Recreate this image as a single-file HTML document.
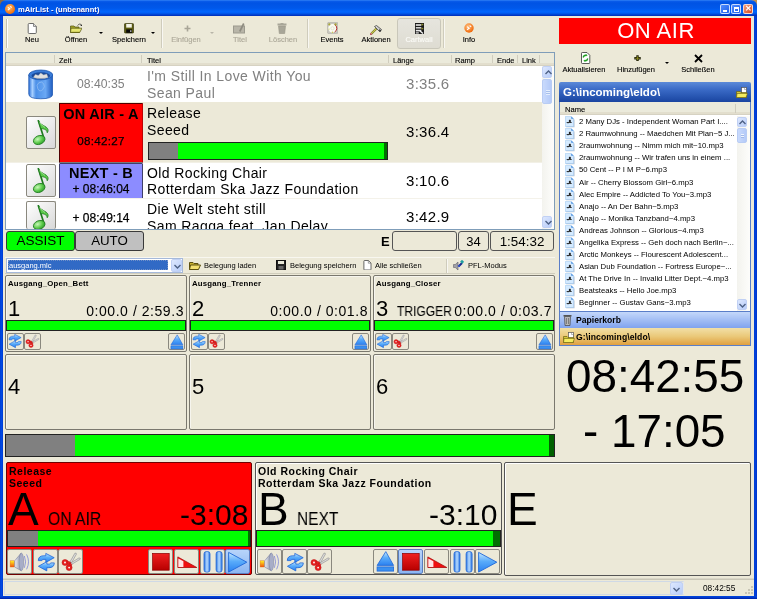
<!DOCTYPE html>
<html><head><meta charset="utf-8">
<style>
*{box-sizing:border-box;margin:0;padding:0}
html,body{width:757px;height:599px;overflow:hidden;background:#ECE9D8;font-family:"Liberation Sans",sans-serif;color:#000}
.a{position:absolute}
.t{position:absolute;white-space:nowrap;line-height:1;will-change:transform}
/* title bar */
#tb{left:0;top:0;width:757px;height:16px;border-radius:6px 6px 0 0;
 background:linear-gradient(#3C8CF7 0,#0A5CEB 1px,#0053E4 3px,#0058EA 8px,#0066FF 12px,#0050E0 14px,#0038C8 15px,#0030B8 16px)}
#lb{left:0;top:16px;width:3px;height:580px;background:linear-gradient(90deg,#0033CC,#0050E8 1px,#0044DD 2px,#0038D0 3px)}
#rb{left:754px;top:16px;width:3px;height:580px;background:linear-gradient(90deg,#0038D0,#0044DD 1px,#0033CC 3px)}
#bb{left:0;top:596px;width:757px;height:3px;background:linear-gradient(#0048E0,#0038CC 1.5px,#0020A0 3px)}
.sep{position:absolute;width:2px;border-left:1px solid #CFCCBC;border-right:1px solid #F8F7F2}
.tbt{position:absolute;font-size:7.5px;color:#000;white-space:nowrap;line-height:1;text-align:center;will-change:transform;-webkit-text-stroke:0.12px currentColor}
.dis{color:#ACA899}
.arrow{position:absolute;width:0;height:0;border-left:2.5px solid transparent;border-right:2.5px solid transparent;border-top:2.5px solid #000}
.hdr{position:absolute;font-size:7.5px;line-height:1;white-space:nowrap;will-change:transform;-webkit-text-stroke:0.12px #000}
.hsep{position:absolute;width:1px;height:8px;background:#D0CDBE}
.mus{position:absolute;width:30px;height:33px;border:1px solid #8A887E;border-radius:2px;background:linear-gradient(135deg,#FFFFFF,#E8E8E8 60%,#D8D8D8)}
.pbar{position:absolute;border:1px solid #222;background:#00FF00}
.rbtn{position:absolute;border:1px solid #555;border-radius:3px}
.cart{position:absolute;border:1px solid #7A786E;border-radius:2px;box-shadow:inset 1px 1px 0 #F6F5EE}
.cbtn{position:absolute;width:17px;height:17px;border:1px solid #8A887E;border-radius:2px;background:#ECE9D8}
.pbtn{position:absolute;width:25px;height:25px;border:1px solid #8A887E;border-radius:2px;background:#ECE9D8}
.fl{position:absolute;font-size:7.75px;line-height:1;white-space:nowrap;color:#000;will-change:transform}
.fic{position:absolute;width:8px;height:10px;border:1px solid #7E9BC9;border-radius:1px;background:linear-gradient(90deg,#fff,#DCE8FA)}
</style></head><body>
<svg width="0" height="0" style="position:absolute">
<defs>
<linearGradient id="gBlue" x1="0" y1="0" x2="0" y2="1"><stop offset="0" stop-color="#C8E8FF"/><stop offset="0.45" stop-color="#5AACFA"/><stop offset="1" stop-color="#2A80F0"/></linearGradient>
<linearGradient id="gBlueH" x1="0" y1="0" x2="1" y2="0"><stop offset="0" stop-color="#2A74E0"/><stop offset="0.5" stop-color="#B8DCFF"/><stop offset="1" stop-color="#2A74E0"/></linearGradient>
<linearGradient id="gRed" x1="0" y1="0" x2="0" y2="1"><stop offset="0" stop-color="#F02020"/><stop offset="1" stop-color="#B80000"/></linearGradient>
<linearGradient id="gCone" x1="0" y1="0" x2="1" y2="0"><stop offset="0" stop-color="#F0F0F8"/><stop offset="1" stop-color="#8890A8"/></linearGradient>
<linearGradient id="gOr" x1="0" y1="0" x2="0" y2="1"><stop offset="0" stop-color="#FFF020"/><stop offset="1" stop-color="#F05010"/></linearGradient>
<radialGradient id="gNote" cx="40%" cy="35%" r="70%"><stop offset="0" stop-color="#C8F8B8"/><stop offset="0.6" stop-color="#58C848"/><stop offset="1" stop-color="#2A9A2A"/></radialGradient>
<symbol id="sLoop" viewBox="0 0 25 25"><g fill="url(#gBlue)" stroke="#1E66D8" stroke-width="0.8" stroke-linejoin="round"><path d="M5.3 11.6C5.3 8.2 7.4 6.8 10.8 6.8H12.8V4.4L21.2 8.7 12.8 13.4V10.4H11C9.6 10.4 8.9 10.9 8.9 11.6Z"/><path d="M21.3 13.9C21.3 17.3 19.2 18.7 15.8 18.7H13.8V21.9L5.4 17.3 13.8 12.7V15.1H15.6C17 15.1 17.7 14.6 17.7 13.9Z"/></g></symbol>
<symbol id="sSc" viewBox="0 0 25 25"><g fill="#DCDCDC" stroke="#8A8A8A" stroke-width="0.6" stroke-linejoin="round"><path d="M11.6 13.6L16.9 4.2Q18.6 3.6 18.4 5.2L13.3 14.2Z"/><path d="M12.4 14.2L21 8.9Q22.9 8.9 22.1 10.3L13.5 15.4Z"/></g><g fill="#E82020" stroke="#B81010" stroke-width="0.5"><circle cx="7" cy="13.5" r="3"/><circle cx="11.1" cy="18.6" r="3"/><path d="M9 11.8L12.6 13.2 12.2 15.2 9.4 15.4Z"/><path d="M10.6 15.8L12.6 14 13.8 15.6 13.2 16.8Z"/></g><circle cx="7" cy="13.5" r="0.9" fill="#fff"/><circle cx="11.1" cy="18.6" r="0.9" fill="#fff"/></symbol>
<symbol id="sSpk" viewBox="0 0 25 25"><rect x="3.1" y="11.8" width="4.6" height="6.2" fill="url(#gOr)" stroke="#E07010" stroke-width="0.4"/><path d="M7.7 11.8L14.2 4V21.7L7.7 18Z" fill="url(#gCone)" stroke="#7A80A0" stroke-width="0.6"/><ellipse cx="14.4" cy="12.9" rx="2.3" ry="8.8" fill="#A8AEC8" stroke="#7A80A0" stroke-width="0.5"/><path d="M17.4 7Q19.8 12.8 17.4 18.8M19.6 5.4Q23.4 12.8 19.6 20.3" stroke="#8890D8" stroke-width="0.9" fill="none"/></symbol>
<symbol id="sStop" viewBox="0 0 25 25"><rect x="4.6" y="4.4" width="16.6" height="16.8" fill="url(#gRed)" stroke="#8A0000" stroke-width="0.7"/></symbol>
<symbol id="sFade" viewBox="0 0 25 25"><path d="M3.8 7.9V18.5H22.8Z" fill="#F01010" stroke="#A00000" stroke-width="0.7"/><path d="M4.3 9.5V18H9.4V12.2Z" fill="#FFE4E4"/></symbol>
<symbol id="sPause" viewBox="0 0 25 25"><rect x="4" y="2.6" width="6" height="20.5" rx="2.3" fill="url(#gBlueH)" stroke="#1E66D8" stroke-width="0.8"/><rect x="16.1" y="2.6" width="6" height="20.5" rx="2.3" fill="url(#gBlueH)" stroke="#1E66D8" stroke-width="0.8"/></symbol>
<symbol id="sPlay" viewBox="0 0 25 25"><path d="M3.6 3.4L21.8 13.2 3.6 23.1Z" fill="url(#gBlue)" stroke="#1E66D8" stroke-width="0.9" stroke-linejoin="round"/></symbol>
<symbol id="sEject" viewBox="0 0 25 25"><path d="M12.8 2.6L20.6 16.4H4.1Z" fill="url(#gBlue)" stroke="#1E66D8" stroke-width="0.8" stroke-linejoin="round"/><rect x="4.1" y="17.9" width="16.5" height="4.2" fill="#3A90F0" stroke="#1E66D8" stroke-width="0.8"/></symbol>
<symbol id="sNote" viewBox="0 0 29 32"><path d="M12.2 4.2L18 22.5" stroke="#1E7A1E" stroke-width="1.7"/><path d="M12.2 4C13.5 8 17 9 20 11 22.5 12.8 22.6 15 21.2 16.8 21 14 19 13 14.8 12.5Z" fill="#58C848" stroke="#1E7A1E" stroke-width="0.8"/><path d="M13.5 6.5C15 9 17.5 10 19 11.5" stroke="#B8F0A8" stroke-width="0.7" fill="none"/><ellipse cx="13.2" cy="24" rx="6" ry="4.3" transform="rotate(-22 13.2 24)" fill="url(#gNote)" stroke="#1E7A1E" stroke-width="0.8"/></symbol>
</defs></svg>
<!-- window frame -->
<div class="a" style="left:0;top:0;width:8px;height:8px;background:#8A6A48"></div><div class="a" style="left:749px;top:0;width:8px;height:8px;background:#C09050"></div>
<div id="tb" class="a"></div>
<div id="lb" class="a"></div>
<div id="rb" class="a"></div>
<div id="bb" class="a"></div>
<div class="a" style="left:5.2px;top:4.4px;width:9.5px;height:9.5px;border-radius:50%;background:radial-gradient(circle at 40% 35%,#FFC070,#F07010 70%,#C85000)"></div><svg class="a" style="left:5.2px;top:4.4px" width="9.5" height="9.5" viewBox="0 0 10 10"><path d="M3 3.5l2 1.5-2 1.5M5.5 2.5l1.5 1.2" stroke="#fff" stroke-width="1.1" fill="none"/></svg>
<div class="t" style="left:18px;top:6px;font-size:7.6px;font-weight:bold;color:#fff;text-shadow:0.5px 0.5px 0 #0A1E9A">mAirList - (unbenannt)</div>
<div class="a" style="left:720px;top:4px;width:10px;height:10px;border:1px solid rgba(230,240,255,0.85);border-radius:2px;background:linear-gradient(135deg,#4D8BFF,#1F5FE8)"><div class="a" style="left:2px;top:5px;width:4px;height:2px;background:#fff"></div></div>
<div class="a" style="left:731px;top:4px;width:10px;height:10px;border:1px solid rgba(230,240,255,0.85);border-radius:2px;background:linear-gradient(135deg,#4D8BFF,#1F5FE8)"><div class="a" style="left:2px;top:2px;width:5px;height:5px;border:1px solid #fff;border-top-width:2px"></div></div>
<div class="a" style="left:743px;top:4px;width:10px;height:10px;border:1px solid rgba(255,235,225,0.85);border-radius:2px;background:linear-gradient(135deg,#F0A080,#D84820)"><div class="t" style="left:1px;top:0px;font-size:8px;font-weight:bold;color:#fff">&#x2715;</div></div>

<!-- toolbar -->
<div class="a" style="left:6px;top:19px;width:2px;height:29px;border-left:1px solid #C5C2B2;border-right:1px solid #fff"></div>
<!-- main toolbar labels -->
<div class="tbt " style="left:-8.00px;top:35.65px;width:80px;font-size:7.5px">Neu</div>
<div class="tbt " style="left:36.30px;top:35.65px;width:80px;font-size:7.5px">Öffnen</div>
<div class="tbt " style="left:88.80px;top:35.65px;width:80px;font-size:7.5px">Speichern</div>
<div class="tbt dis" style="left:146.00px;top:35.65px;width:80px;font-size:7.5px">Einfügen</div>
<div class="tbt dis" style="left:199.50px;top:35.65px;width:80px;font-size:7.5px">Titel</div>
<div class="tbt dis" style="left:243.25px;top:35.65px;width:80px;font-size:7.5px">Löschen</div>
<div class="tbt " style="left:292.20px;top:35.65px;width:80px;font-size:7.5px">Events</div>
<div class="tbt " style="left:335.60px;top:35.65px;width:80px;font-size:7.5px">Aktionen</div>
<div class="tbt " style="left:428.90px;top:35.65px;width:80px;font-size:7.5px">Info</div>
<!-- right toolbar labels -->
<div class="tbt " style="left:543.50px;top:65.65px;width:80px;font-size:7.5px">Aktualisieren</div>
<div class="tbt " style="left:596.30px;top:65.65px;width:80px;font-size:7.5px">Hinzufügen</div>
<div class="tbt " style="left:657.70px;top:65.65px;width:80px;font-size:7.5px">Schließen</div>
<!-- toolbar separators -->
<div class="sep" style="left:161px;top:19px;height:29px"></div>
<div class="sep" style="left:307px;top:19px;height:29px"></div>
<div class="sep" style="left:443px;top:19px;height:29px"></div>
<!-- cartwall pressed button -->
<div class="a" style="left:397px;top:18px;width:44px;height:31px;border:1px solid #C9C7BA;border-radius:3px;background:linear-gradient(#E6E5DE,#DEDCD2)"></div>
<div class="tbt" style="left:379.4px;top:35.65px;width:80px;font-size:7.5px;color:#FAFAF6">Cartwall</div>
<!-- icons -->
<svg class="a" style="left:26.6px;top:22.8px" width="10" height="11" viewBox="0 0 10 11"><path d="M1.2 1.5q0-1 1-1h4.3l2.8 2.8v6.2q0 1-1 1h-6.1q-1 0-1-1z" fill="#fff" stroke="#5A5A5A" stroke-width="0.9"/><path d="M6.5 0.6v2.8h2.8" fill="#E8E8E8" stroke="#5A5A5A" stroke-width="0.7"/></svg>
<svg class="a" style="left:69.8px;top:22.8px" width="12.5" height="10" viewBox="0 0 12.5 10"><path d="M0.5 3h3.5l1 1h4v5.5h-8.5z" fill="#A8A828" stroke="#505010" stroke-width="0.7"/><path d="M1 5.2h11l-2.3 4.3h-9.2z" fill="#E6E670" stroke="#505010" stroke-width="0.7"/><path d="M1.2 9.3h8.6" stroke="#6A6A10" stroke-width="0.8"/><path d="M7.5 2.5q1.5-2.2 3.5-1.2" stroke="#333" stroke-width="0.7" fill="none"/><circle cx="11.3" cy="2.3" r="0.8" fill="#222"/></svg>
<svg class="a" style="left:123.5px;top:23px" width="10" height="10.5" viewBox="0 0 10 10.5"><rect x="0.4" y="0.4" width="9.2" height="9.7" rx="1.2" fill="#5A5A10" stroke="#2A2A08" stroke-width="0.6"/><rect x="2.2" y="1" width="5.6" height="3.6" fill="#F4F4E8"/><rect x="2.2" y="6.4" width="5.8" height="3.4" fill="#080808"/><rect x="6.2" y="7.3" width="1.2" height="1.6" fill="#E0E0E0"/></svg>
<div class="arrow" style="left:98.8px;top:31.8px"></div>
<div class="arrow" style="left:151.2px;top:31.8px"></div>
<div class="arrow" style="left:210px;top:31.5px;border-left-width:2px;border-right-width:2px;border-top-width:2px;border-top-color:#B8B5A8"></div>
<svg class="a" style="left:183.5px;top:25px" width="7" height="7" viewBox="0 0 7 7"><path d="M3.5 0.5v6M0.5 3.5h6" stroke="#A8A597" stroke-width="1.6"/></svg>
<svg class="a" style="left:233px;top:22px" width="13" height="12" viewBox="0 0 13 12"><rect x="0.5" y="4" width="11" height="7" fill="#B8B5A8" stroke="#9C9A8E"/><path d="M6 9l4-8 1.5 1-4 8z" fill="#8E8C80"/></svg>
<svg class="a" style="left:277px;top:23px" width="10" height="11" viewBox="0 0 10 11"><rect x="0.5" y="0.5" width="9" height="2" fill="#A8A698"/><rect x="3.5" y="0" width="3" height="1" fill="#A8A698"/><path d="M1.5 3h7l-0.8 7.5h-5.4z" fill="#A8A698" stroke="#989688" stroke-width="0.6"/></svg>
<svg class="a" style="left:326.5px;top:22px" width="11.5" height="12" viewBox="0 0 11.5 12"><rect x="0.3" y="0.3" width="10.9" height="11.4" rx="1.8" fill="#C8C6BE" stroke="#A8A69E" stroke-width="0.5"/><circle cx="5.5" cy="6.3" r="4.2" fill="#FBFBF0"/><path d="M7.6 2.6a4.2 4.2 0 0 1 0 7.4" stroke="#B83030" stroke-width="1" fill="none"/><circle cx="5.5" cy="6.3" r="1.6" fill="none" stroke="#D8D8C8" stroke-width="0.7"/><circle cx="2.3" cy="2.4" r="1.1" fill="#A8A838"/><circle cx="8.6" cy="2.4" r="1.1" fill="#A8A838"/><circle cx="5.5" cy="10.3" r="0.7" fill="#C8C848"/><circle cx="2" cy="7" r="0.6" fill="#C8C848"/></svg>
<svg class="a" style="left:369.5px;top:24.5px" width="12" height="10" viewBox="0 0 12 10"><path d="M0.8 9.2L6.5 3.5" stroke="#6A6A20" stroke-width="2.2" stroke-linecap="round"/><path d="M0.8 9.2L6.5 3.5" stroke="#C8C850" stroke-width="1.2"/><path d="M4.5 1.5L6.5 0.5 11.5 4.5 10 7 Z" fill="#D0D0D0" stroke="#333" stroke-width="0.7"/><path d="M9.2 4.8l1.5 1.2" stroke="#222" stroke-width="1.2"/><circle cx="0.9" cy="9.1" r="0.8" fill="#F040A0"/></svg>
<svg class="a" style="left:415px;top:22.5px" width="9" height="11.5" viewBox="0 0 9 11.5"><rect x="0" y="0" width="9" height="11.5" fill="#1A1A1A"/><rect x="0.8" y="1.2" width="5.5" height="1.6" fill="#E8E8E8"/><rect x="0.8" y="4" width="5.5" height="1.6" fill="#D0D0D0"/><rect x="0.8" y="6.8" width="5.5" height="1.6" fill="#E8E8E8"/><rect x="0.8" y="9.2" width="3" height="1.4" fill="#C8C8C8"/><rect x="6.3" y="0.8" width="2" height="1.5" fill="#8A8A30"/><rect x="6.3" y="4.8" width="2" height="1.5" fill="#8A8A30"/><path d="M5 8l3 2.5" stroke="#F0F0F0" stroke-width="1.4"/></svg>
<svg class="a" style="left:463.5px;top:23px" width="10" height="10" viewBox="0 0 10 10"><defs><radialGradient id="ig" cx="40%" cy="35%" r="65%"><stop offset="0" stop-color="#FFC080"/><stop offset="1" stop-color="#F06808"/></radialGradient></defs><circle cx="5" cy="5" r="4.7" fill="url(#ig)"/><path d="M3 3.6l2.2 1.6-2.2 1.6M5.6 2.6l1.6 1.2" stroke="#fff" stroke-width="1.1" fill="none"/></svg>
<!-- right panel ON AIR -->
<div class="a" style="left:559px;top:18px;width:192px;height:26px;background:#FF0000"></div>
<div class="t" style="left:559.5px;top:20.1px;width:192px;text-align:center;font-size:22px;letter-spacing:0.5px;color:#fff">ON AIR</div>
<svg class="a" style="left:579.5px;top:52px" width="11" height="12" viewBox="0 0 11 12"><path d="M1.5 1.3q0-0.8 0.8-0.8h4.7l2.8 2.8v7.4q0 0.8-0.8 0.8h-6.7q-0.8 0-0.8-0.8z" fill="#fff" stroke="#333" stroke-width="0.8"/><path d="M3.2 5.5q0.5-2.5 3-2.2M7.8 6.5q-0.5 2.5-3 2.2" stroke="#20A020" stroke-width="1.3" fill="none"/><path d="M5.8 2l1.8 1.3-1.8 1.3z" fill="#20A020"/><path d="M5.2 10l-1.8-1.3 1.8-1.3z" fill="#20A020"/></svg>
<svg class="a" style="left:634px;top:54.8px" width="7" height="6.5" viewBox="0 0 7 6.5"><path d="M3.5 0.3v5.9M0.3 3.25h6.4" stroke="#202008" stroke-width="2.4"/><path d="M3.5 1.3v3.9M1.3 3.25h4.4" stroke="#8A8A20" stroke-width="0.9"/></svg>
<div class="arrow" style="left:664.5px;top:61.5px"></div>
<svg class="a" style="left:694px;top:54px" width="9" height="9" viewBox="0 0 9 9"><path d="M1 1l7 7M8 1l-7 7" stroke="#000" stroke-width="1.8"/></svg>

<!-- playlist -->
<div class="a" style="left:5px;top:52px;width:550px;height:178px;border:1px solid #7F9DB9;background:#fff"></div>
<div class="a" style="left:6px;top:53px;width:548px;height:13px;background:#EBEADB;border-bottom:1px solid #D6D2C2;box-shadow:inset 0 -2px 0 #E2DECD"></div>
<div class="hsep" style="left:54px;top:55px"></div>
<div class="hsep" style="left:141px;top:55px"></div>
<div class="hsep" style="left:388px;top:55px"></div>
<div class="hsep" style="left:451px;top:55px"></div>
<div class="hsep" style="left:492px;top:55px"></div>
<div class="hsep" style="left:517px;top:55px"></div>
<div class="hsep" style="left:539px;top:55px"></div>
<div class="hdr" style="left:59px;top:56.6px;font-size:7.5px">Zeit</div>
<div class="hdr" style="left:147px;top:56.6px;font-size:7.5px">Titel</div>
<div class="hdr" style="left:392.5px;top:56.6px;font-size:7.5px">Länge</div>
<div class="hdr" style="left:455px;top:56.6px;font-size:7.5px">Ramp</div>
<div class="hdr" style="left:496.5px;top:56.6px;font-size:7.5px">Ende</div>
<div class="hdr" style="left:521.5px;top:56.6px;font-size:7.5px">Link</div>
<!-- row1 -->
<svg class="a" style="left:27.5px;top:69px" width="25.5" height="30.5" viewBox="0 0 26 31"><defs><linearGradient id="bin" x1="0" x2="1"><stop offset="0" stop-color="#2A70D8"/><stop offset="0.15" stop-color="#A8D0FF"/><stop offset="0.3" stop-color="#4C90E8"/><stop offset="0.7" stop-color="#6AA8F4"/><stop offset="1" stop-color="#1E5CC0"/></linearGradient></defs><path d="M0.8 6v19.5q0 4.8 12.2 4.8t12.2-4.8v-19.5z" fill="url(#bin)" stroke="#2058B0" stroke-width="0.8"/><ellipse cx="13" cy="6" rx="12.2" ry="5" fill="#3A7CD8" stroke="#2058B0" stroke-width="0.8"/><ellipse cx="13" cy="6.8" rx="9.5" ry="3.6" fill="#1A4A9A"/><path d="M5.5 8.5l2-3 3 1 2.5-2.5 3 2 3-1 1.5 3.5q-7 2.5-15 0z" fill="#E0E0E0" stroke="#B0B0B0" stroke-width="0.4"/><path d="M11 14q3-2 5 1t-1 6-5-1 1-6z" fill="none" stroke="#9CC4F4" stroke-width="0.8" opacity="0.8"/></svg>
<div class="t" style="left:77px;top:78.2px;font-size:12.2px;color:#808080">08:40:35</div>
<div class="t" style="left:147px;top:68.7px;font-size:14px;letter-spacing:0.4px;color:#808080">I'm Still In Love With You</div>
<div class="t" style="left:147px;top:85.6px;font-size:14px;letter-spacing:0.4px;color:#808080">Sean Paul</div>
<div class="t" style="left:405.5px;top:76.2px;font-size:15px;letter-spacing:0.3px;color:#808080">3:35.6</div>
<!-- row2 -->
<div class="a" style="left:6px;top:102px;width:536px;height:61px;background:#ECE9D8;border-bottom:1px solid #F2F0E6"></div>
<div class="a" style="left:59px;top:103px;width:84px;height:60px;background:#FF0000;border:1px solid #500000;border-right-color:#C00000;border-bottom-color:#7A7A7A;border-radius:1px"></div>
<div class="t" style="left:59px;top:106.8px;width:84px;text-align:center;font-size:14.5px;font-weight:bold;letter-spacing:0.25px">ON AIR - A</div>
<div class="t" style="left:59px;top:134.8px;width:84px;text-align:center;font-size:11.6px;letter-spacing:0.3px;-webkit-text-stroke:0.25px #000">08:42:27</div>
<div class="t" style="left:147px;top:105.6px;font-size:14px;letter-spacing:0.4px">Release</div>
<div class="t" style="left:147px;top:122.5px;font-size:14px;letter-spacing:0.4px">Seeed</div>
<div class="pbar" style="left:147.5px;top:142px;width:240px;height:18px;background:linear-gradient(90deg,#808080 0,#808080 29px,#00FF00 29px,#00FF00 235.5px,#007000 235.5px)"></div>
<div class="t" style="left:405.5px;top:124.1px;font-size:15px;letter-spacing:0.3px">3:36.4</div>
<!-- row3 -->
<div class="a" style="left:59px;top:163px;width:84px;height:36px;background:#8C8CFF;border:1px solid #40406A;border-radius:1px"></div>
<div class="t" style="left:59px;top:166.4px;width:84px;text-align:center;font-size:14.5px;font-weight:bold;letter-spacing:0.25px">NEXT - B</div>
<div class="t" style="left:59px;top:182.6px;width:84px;text-align:center;font-size:12px;-webkit-text-stroke:0.25px #000">+ 08:46:04</div>
<div class="t" style="left:147px;top:165.7px;font-size:14px;letter-spacing:0.4px">Old Rocking Chair</div>
<div class="t" style="left:147px;top:182.4px;font-size:14px;letter-spacing:0.4px">Rotterdam Ska Jazz Foundation</div>
<div class="t" style="left:405.5px;top:172.6px;font-size:15px;letter-spacing:0.3px">3:10.6</div>
<div class="a" style="left:6px;top:198px;width:536px;height:1px;background:#F4F2EA"></div>
<!-- row4 -->
<div class="a" style="left:0;top:0;width:757px;height:229px;overflow:hidden">
<div class="t" style="left:59px;top:212.4px;width:84px;text-align:center;font-size:12px;-webkit-text-stroke:0.25px #000">+ 08:49:14</div>
<div class="t" style="left:147px;top:201.6px;font-size:14px;letter-spacing:0.4px">Die Welt steht still</div>
<div class="t" style="left:147px;top:218.6px;font-size:14px;letter-spacing:0.4px">Sam Ragga feat. Jan Delay</div>
<div class="t" style="left:405.5px;top:208.8px;font-size:15px;letter-spacing:0.3px">3:42.9</div>
</div>
<!-- music buttons -->
<div class="mus" style="left:25.5px;top:116px"><svg class="a" style="left:-1px;top:-1px" width="29" height="32"><use href="#sNote"/></svg></div>
<div class="mus" style="left:25.5px;top:164px;height:33px"><svg class="a" style="left:-1px;top:-1px" width="29" height="32"><use href="#sNote"/></svg></div>
<div class="mus" style="left:25.5px;top:201px;height:28px;border-bottom:none;overflow:hidden"><svg class="a" style="left:-1px;top:-1px" width="29" height="32"><use href="#sNote"/></svg></div>



<!-- scrollbar -->
<div class="a" style="left:542px;top:66px;width:12px;height:163px;background:linear-gradient(90deg,#F3F3EE,#FDFDFB)"></div>
<div class="a" style="left:542px;top:66px;width:10px;height:12px;border:1px solid #C0D0F4;border-radius:2px;background:linear-gradient(135deg,#DDE8FE,#B8CDF9)"><svg class="a" style="left:2px;top:3px" width="7" height="5" viewBox="0 0 7 5"><path d="M0.5 4l3-3 3 3" stroke="#4D6185" stroke-width="1.4" fill="none"/></svg></div>
<div class="a" style="left:542px;top:78.5px;width:10px;height:25.5px;border:1px solid #B8CCF4;border-radius:2px;background:linear-gradient(90deg,#C9DAFC,#B4CAF8)"><div class="a" style="left:2.5px;top:10px;width:4px;height:5px;background:repeating-linear-gradient(#E4EEFE 0,#E4EEFE 1px,#A8C0EC 1px,#A8C0EC 2px)"></div></div>
<div class="a" style="left:542px;top:216px;width:10px;height:12px;border:1px solid #C0D0F4;border-radius:2px;background:linear-gradient(135deg,#DDE8FE,#B8CDF9)"><svg class="a" style="left:2px;top:3px" width="7" height="5" viewBox="0 0 7 5"><path d="M0.5 1l3 3 3-3" stroke="#4D6185" stroke-width="1.4" fill="none"/></svg></div>

<!-- assist row -->
<div class="rbtn" style="left:6px;top:231px;width:69px;height:20px;background:#00FF00;border-color:#3A3A3A"></div>
<div class="t" style="left:6px;top:234.1px;width:69px;text-align:center;font-size:13.5px">ASSIST</div>
<div class="rbtn" style="left:75px;top:231px;width:69px;height:20px;background:#C0C0C0;border-color:#3A3A3A"></div>
<div class="t" style="left:75px;top:234.4px;width:69px;text-align:center;font-size:13.3px">AUTO</div>
<div class="t" style="left:381px;top:234.6px;font-size:13px;font-weight:bold">E</div>
<div class="rbtn" style="left:392px;top:231px;width:65px;height:20px;border-color:#555"></div>
<div class="rbtn" style="left:458px;top:231px;width:31px;height:20px;border-color:#555"></div>
<div class="t" style="left:458px;top:235.3px;width:31px;text-align:center;font-size:13px">34</div>
<div class="rbtn" style="left:490px;top:231px;width:64px;height:20px;border-color:#555"></div>
<div class="t" style="left:490px;top:235.3px;width:64px;text-align:center;font-size:13.4px">1:54:32</div>
<!-- cartwall toolbar -->
<div class="a" style="left:5px;top:257px;width:550px;height:17px;border-top:1px solid #F8F7F0;border-bottom:1px solid #D0CDBC"></div>
<div class="a" style="left:6px;top:258px;width:177px;height:15px;border:1px solid #A5B9DA;background:#fff"></div>
<div class="a" style="left:8px;top:260px;width:160px;height:10px;background:#316AC5;border:1px dotted #7090C8"></div>
<div class="t" style="left:8.5px;top:261.6px;font-size:7.5px;color:#fff">ausgang.mlc</div>
<div class="a" style="left:171px;top:259px;width:11px;height:13px;border:1px solid #C0D0F4;border-radius:2px;background:linear-gradient(135deg,#DDE8FE,#B8CDF9)"><svg class="a" style="left:2px;top:4px" width="7" height="5" viewBox="0 0 7 5"><path d="M0.5 1l3 3 3-3" stroke="#4D6185" stroke-width="1.4" fill="none"/></svg></div>
<svg class="a" style="left:189px;top:260px" width="12" height="10" viewBox="0 0 12 10"><path d="M0.5 2.5h3.5l1 1h4v6h-8.5z" fill="#C8B030" stroke="#5C5010"/><path d="M1.5 5h10l-2 4.5h-9z" fill="#F4E070" stroke="#5C5010"/></svg>
<div class="t" style="left:203.5px;top:262px;font-size:7.5px">Belegung laden</div>
<svg class="a" style="left:276px;top:260px" width="10" height="10" viewBox="0 0 10 10"><rect x="0.5" y="0.5" width="9" height="9" fill="#222" stroke="#111"/><rect x="2" y="1" width="6" height="3" fill="#E8E8D8"/><rect x="2.5" y="6" width="5" height="3.5" fill="#666"/></svg>
<div class="t" style="left:290px;top:262px;font-size:7.5px">Belegung speichern</div>
<svg class="a" style="left:363px;top:259.5px" width="8.5" height="10.5" viewBox="0 0 8.5 10.5"><path d="M0.9 1.2q0-0.7 0.7-0.7h3.8l2.6 2.6v6.2q0 0.7-0.7 0.7h-5.7q-0.7 0-0.7-0.7z" fill="#fff" stroke="#444" stroke-width="0.8"/><path d="M5.3 0.6v2.6h2.6" fill="none" stroke="#666" stroke-width="0.6"/></svg>
<div class="t" style="left:375.4px;top:262px;font-size:7.5px">Alle schließen</div>
<div class="sep" style="left:446px;top:259px;height:14px"></div>
<svg class="a" style="left:453px;top:259.5px" width="11" height="11" viewBox="0 0 11 11"><path d="M0.5 4.5h1.8l2.7-2.5v8l-2.7-2.5h-1.8z" fill="#A0A0A8" stroke="#606068" stroke-width="0.6"/><path d="M5.5 6.5l3.5-3.5" stroke="#1A2A90" stroke-width="2"/><rect x="7.6" y="0.4" width="3" height="2.8" fill="#20A0A0" transform="rotate(45 9.1 1.8)"/><circle cx="6" cy="6" r="1" fill="#3050D0"/></svg>
<div class="t" style="left:467.8px;top:262px;font-size:7.5px">PFL-Modus</div>

<!-- cart panels -->
<div class="cart" style="left:5px;top:275px;width:182px;height:77px"></div>
<div class="t" style="left:7.5px;top:279.9px;font-size:7.8px;font-weight:bold;letter-spacing:0.2px">Ausgang_Open_Bett</div>
<div class="t" style="left:8px;top:297.6px;font-size:22px">1</div>
<div class="t" style="left:5px;top:303.8px;width:179px;text-align:right;font-size:14px;letter-spacing:0.55px">0:00.0 / 2:59.3</div>
<div class="pbar" style="left:6px;top:320px;width:180px;height:11px"></div>
<div class="cbtn" style="left:6.5px;top:333px"><svg class="a" style="left:-2.6px;top:-2.8px" width="19" height="19"><use href="#sLoop"/></svg></div>
<div class="cbtn" style="left:23.5px;top:333px"><svg class="a" style="left:-2px;top:-2px" width="18" height="18"><use href="#sSc"/></svg></div>
<div class="cbtn" style="left:168px;top:333px"><svg class="a" style="left:-1.5px;top:-1.5px" width="18" height="18"><use href="#sEject"/></svg></div>
<div class="cart" style="left:189px;top:275px;width:182px;height:77px"></div>
<div class="t" style="left:191.5px;top:279.9px;font-size:7.8px;font-weight:bold;letter-spacing:0.2px">Ausgang_Trenner</div>
<div class="t" style="left:192px;top:297.6px;font-size:22px">2</div>
<div class="t" style="left:189px;top:303.8px;width:179px;text-align:right;font-size:14px;letter-spacing:0.55px">0:00.0 / 0:01.8</div>
<div class="pbar" style="left:190px;top:320px;width:180px;height:11px"></div>
<div class="cbtn" style="left:190.5px;top:333px"><svg class="a" style="left:-2.6px;top:-2.8px" width="19" height="19"><use href="#sLoop"/></svg></div>
<div class="cbtn" style="left:207.5px;top:333px"><svg class="a" style="left:-2px;top:-2px" width="18" height="18"><use href="#sSc"/></svg></div>
<div class="cbtn" style="left:352px;top:333px"><svg class="a" style="left:-1.5px;top:-1.5px" width="18" height="18"><use href="#sEject"/></svg></div>
<div class="cart" style="left:373px;top:275px;width:182px;height:77px"></div>
<div class="t" style="left:375.5px;top:279.9px;font-size:7.8px;font-weight:bold;letter-spacing:0.2px">Ausgang_Closer</div>
<div class="t" style="left:376px;top:297.6px;font-size:22px">3</div>
<div class="t" style="left:373px;top:303.8px;width:179px;text-align:right;font-size:14px;letter-spacing:0.55px">0:00.0 / 0:03.7</div>
<div class="t" style="left:396.8px;top:303.8px;font-size:14px;transform:scaleX(0.86);transform-origin:0 0">TRIGGER</div>
<div class="pbar" style="left:374px;top:320px;width:180px;height:11px"></div>
<div class="cbtn" style="left:374.5px;top:333px"><svg class="a" style="left:-2.6px;top:-2.8px" width="19" height="19"><use href="#sLoop"/></svg></div>
<div class="cbtn" style="left:391.5px;top:333px"><svg class="a" style="left:-2px;top:-2px" width="18" height="18"><use href="#sSc"/></svg></div>
<div class="cbtn" style="left:536px;top:333px"><svg class="a" style="left:-1.5px;top:-1.5px" width="18" height="18"><use href="#sEject"/></svg></div>
<div class="cart" style="left:5px;top:354px;width:182px;height:76px"></div>
<div class="t" style="left:8.2px;top:376px;font-size:22px">4</div>
<div class="cart" style="left:189px;top:354px;width:182px;height:76px"></div>
<div class="t" style="left:192.2px;top:376px;font-size:22px">5</div>
<div class="cart" style="left:373px;top:354px;width:182px;height:76px"></div>
<div class="t" style="left:376.2px;top:376px;font-size:22px">6</div>
<!-- big bar -->
<div class="pbar" style="left:5px;top:434px;width:550px;height:23px;background:linear-gradient(90deg,#808080 0,#808080 69px,#00FF00 69px,#00FF00 543px,#006000 543px)"></div>
<!-- players -->
<div class="a" style="left:6px;top:462px;width:246px;height:113px;background:#FF0000;border:1px solid #700000;border-radius:2px"></div>
<div class="t" style="left:8.5px;top:466px;font-size:10.5px;font-weight:bold;letter-spacing:0.5px">Release</div>
<div class="t" style="left:8.5px;top:478px;font-size:10.5px;font-weight:bold;letter-spacing:0.5px">Seeed</div>
<div class="t" style="left:8.4px;top:486px;font-size:46px">A</div>
<div class="t" style="left:47.6px;top:510px;font-size:18.5px;transform:scaleX(0.85);transform-origin:0 0">ON AIR</div>
<div class="t" style="left:6px;top:500px;width:242.5px;text-align:right;font-size:30px">-3:08</div>
<div class="pbar" style="left:7px;top:530px;width:244px;height:17px;background:linear-gradient(90deg,#808080 0,#808080 30px,#00FF00 30px,#00FF00 240px,#007000 240px)"></div>
<div class="pbtn" style="left:7px;top:549px;"><svg class="a" style="left:-1px;top:-1px" width="25" height="25"><use href="#sSpk"/></svg></div>
<div class="pbtn" style="left:33px;top:549px;"><svg class="a" style="left:-1px;top:-1px" width="25" height="25"><use href="#sLoop"/></svg></div>
<div class="pbtn" style="left:58px;top:549px;"><svg class="a" style="left:-1px;top:-1px" width="25" height="25"><use href="#sSc"/></svg></div>
<div class="pbtn" style="left:148px;top:549px;"><svg class="a" style="left:-1px;top:-1px" width="25" height="25"><use href="#sStop"/></svg></div>
<div class="pbtn" style="left:174px;top:549px;"><svg class="a" style="left:-1px;top:-1px" width="25" height="25"><use href="#sFade"/></svg></div>
<div class="pbtn" style="left:200px;top:549px;"><svg class="a" style="left:-1px;top:-1px" width="25" height="25"><use href="#sPause"/></svg></div>
<div class="pbtn" style="left:225px;top:549px;background:linear-gradient(#B8D4FA,#8CB6F2);border-color:#5A7EC0"><svg class="a" style="left:-1px;top:-1px" width="25" height="25"><use href="#sPlay"/></svg></div>
<div class="a" style="left:255px;top:462px;width:247px;height:113px;border:1px solid #555;border-radius:2px;box-shadow:inset 1px 1px 0 #fff"></div>
<div class="t" style="left:258px;top:466px;font-size:10.5px;font-weight:bold;letter-spacing:0.5px">Old Rocking Chair</div>
<div class="t" style="left:258px;top:478px;font-size:10.5px;font-weight:bold;letter-spacing:0.5px">Rotterdam Ska Jazz Foundation</div>
<div class="t" style="left:258px;top:486px;font-size:46px">B</div>
<div class="t" style="left:297.1px;top:510px;font-size:18.5px;transform:scaleX(0.84);transform-origin:0 0">NEXT</div>
<div class="t" style="left:255px;top:500px;width:242.5px;text-align:right;font-size:30px">-3:10</div>
<div class="pbar" style="left:256px;top:530px;width:244.5px;height:17px;background:linear-gradient(90deg,#00FF00 0,#00FF00 236px,#007000 236px)"></div>
<div class="pbtn" style="left:257px;top:549px;"><svg class="a" style="left:-1px;top:-1px" width="25" height="25"><use href="#sSpk"/></svg></div>
<div class="pbtn" style="left:282px;top:549px;"><svg class="a" style="left:-1px;top:-1px" width="25" height="25"><use href="#sLoop"/></svg></div>
<div class="pbtn" style="left:307px;top:549px;"><svg class="a" style="left:-1px;top:-1px" width="25" height="25"><use href="#sSc"/></svg></div>
<div class="pbtn" style="left:373px;top:549px;"><svg class="a" style="left:-1px;top:-1px" width="25" height="25"><use href="#sEject"/></svg></div>
<div class="pbtn" style="left:398px;top:549px;background:linear-gradient(#B8D4FA,#8CB6F2);border-color:#5A7EC0"><svg class="a" style="left:-1px;top:-1px" width="25" height="25"><use href="#sStop"/></svg></div>
<div class="pbtn" style="left:424px;top:549px;"><svg class="a" style="left:-1px;top:-1px" width="25" height="25"><use href="#sFade"/></svg></div>
<div class="pbtn" style="left:450px;top:549px;"><svg class="a" style="left:-1px;top:-1px" width="25" height="25"><use href="#sPause"/></svg></div>
<div class="pbtn" style="left:475px;top:549px;"><svg class="a" style="left:-1px;top:-1px" width="25" height="25"><use href="#sPlay"/></svg></div>
<div class="a" style="left:504px;top:462px;width:247px;height:114px;border:1px solid #555;border-radius:2px;box-shadow:inset 1px 1px 0 #fff"></div>
<div class="t" style="left:507px;top:486px;font-size:46px">E</div>
<!-- status bar -->
<div class="a" style="left:3px;top:578px;width:751px;height:1px;background:#DAD7C8"></div>
<div class="a" style="left:3px;top:579px;width:751px;height:1px;background:#C9C6B6"></div>
<div class="a" style="left:4px;top:580.5px;width:680px;height:14.5px;border:1px solid #CFD9E6;border-right-color:#E4E8EE"></div>
<div class="a" style="left:670px;top:581.5px;width:12.5px;height:13px;border:1px solid #C0D0F4;border-radius:2px;background:linear-gradient(135deg,#DDE8FE,#B8CDF9)"><svg class="a" style="left:2px;top:4px" width="7" height="5" viewBox="0 0 7 5"><path d="M0.5 1l3 3 3-3" stroke="#4D6185" stroke-width="1.4" fill="none"/></svg></div>
<div class="t" style="left:703px;top:584.2px;font-size:8.3px">08:42:55</div>
<svg class="a" style="left:744px;top:585px" width="10" height="10" viewBox="0 0 10 10"><g fill="#C8C5B5"><rect x="7" y="1" width="2" height="2"/><rect x="4" y="4" width="2" height="2"/><rect x="7" y="4" width="2" height="2"/><rect x="1" y="7" width="2" height="2"/><rect x="4" y="7" width="2" height="2"/><rect x="7" y="7" width="2" height="2"/></g></svg>
<!-- file browser -->
<div class="a" style="left:559px;top:82px;width:192px;height:20px;border-radius:2px 2px 0 0;background:linear-gradient(#5C8AD8,#3C6CC8 35%,#2654B0 75%,#1A44A0)"></div>
<div class="t" style="left:562.5px;top:86.9px;font-size:11.5px;font-weight:bold;color:#fff">G:\incoming\eldo\</div>
<svg class="a" style="left:735.5px;top:86.5px" width="12" height="11" viewBox="0 0 12 11"><rect x="5.5" y="0.5" width="5" height="6.5" fill="#fff" stroke="#555" stroke-width="0.7"/><path d="M8.5 0.5v2h2" fill="none" stroke="#777" stroke-width="0.5"/><path d="M0.5 4.5h3.5l1 1h5.5v5h-10z" fill="#D8C838" stroke="#6A6010" stroke-width="0.7"/><path d="M1 6.5h10.5l-1.5 4h-9.5z" fill="#F4EC60" stroke="#6A6010" stroke-width="0.6"/></svg>
<div class="a" style="left:559px;top:102px;width:192px;height:210px;border:1px solid #5A7EC8;border-top:none;background:#fff"></div>
<div class="a" style="left:560px;top:102px;width:190px;height:13px;background:#EBEADB;box-shadow:inset 0 -2px 0 #E2DECD;border-bottom:1px solid #D6D2C2"></div>
<div class="hsep" style="left:735px;top:104px;height:9px"></div>
<div class="hdr" style="left:564.5px;top:105.5px;font-size:7.6px">Name</div>
<svg class="a" style="left:565px;top:116.30px" width="10" height="12" viewBox="0 0 10 12"><path d="M1.2 1.2h5.8l2.5 2.5v7.6h-8.3z" fill="#8A9AAA" opacity="0.6"/><path d="M0.4 0.4h5.8l2.4 2.4v7.7h-8.2z" fill="#D4EAFF" stroke="#A0C8F0" stroke-width="0.6"/><path d="M6.2 0.4l2.4 2.4h-2.4z" fill="#4A90E0"/><ellipse cx="3" cy="6.6" rx="1.6" ry="0.6" fill="#222"/><rect x="3.9" y="3.8" width="1.9" height="2.9" rx="0.6" fill="#222"/><ellipse cx="5.6" cy="6.6" rx="1.4" ry="0.5" fill="#333"/></svg>
<div class="fl" style="left:578.5px;top:118.20px">2 Many DJs - Independent Woman Part I....</div>
<svg class="a" style="left:565px;top:128.37px" width="10" height="12" viewBox="0 0 10 12"><path d="M1.2 1.2h5.8l2.5 2.5v7.6h-8.3z" fill="#8A9AAA" opacity="0.6"/><path d="M0.4 0.4h5.8l2.4 2.4v7.7h-8.2z" fill="#D4EAFF" stroke="#A0C8F0" stroke-width="0.6"/><path d="M6.2 0.4l2.4 2.4h-2.4z" fill="#4A90E0"/><ellipse cx="3" cy="6.6" rx="1.6" ry="0.6" fill="#222"/><rect x="3.9" y="3.8" width="1.9" height="2.9" rx="0.6" fill="#222"/><ellipse cx="5.6" cy="6.6" rx="1.4" ry="0.5" fill="#333"/></svg>
<div class="fl" style="left:578.5px;top:130.27px">2 Raumwohnung -- Maedchen Mit Plan~5 J...</div>
<svg class="a" style="left:565px;top:140.44px" width="10" height="12" viewBox="0 0 10 12"><path d="M1.2 1.2h5.8l2.5 2.5v7.6h-8.3z" fill="#8A9AAA" opacity="0.6"/><path d="M0.4 0.4h5.8l2.4 2.4v7.7h-8.2z" fill="#D4EAFF" stroke="#A0C8F0" stroke-width="0.6"/><path d="M6.2 0.4l2.4 2.4h-2.4z" fill="#4A90E0"/><ellipse cx="3" cy="6.6" rx="1.6" ry="0.6" fill="#222"/><rect x="3.9" y="3.8" width="1.9" height="2.9" rx="0.6" fill="#222"/><ellipse cx="5.6" cy="6.6" rx="1.4" ry="0.5" fill="#333"/></svg>
<div class="fl" style="left:578.5px;top:142.34px">2raumwohnung -- Nimm mich mit~10.mp3</div>
<svg class="a" style="left:565px;top:152.51px" width="10" height="12" viewBox="0 0 10 12"><path d="M1.2 1.2h5.8l2.5 2.5v7.6h-8.3z" fill="#8A9AAA" opacity="0.6"/><path d="M0.4 0.4h5.8l2.4 2.4v7.7h-8.2z" fill="#D4EAFF" stroke="#A0C8F0" stroke-width="0.6"/><path d="M6.2 0.4l2.4 2.4h-2.4z" fill="#4A90E0"/><ellipse cx="3" cy="6.6" rx="1.6" ry="0.6" fill="#222"/><rect x="3.9" y="3.8" width="1.9" height="2.9" rx="0.6" fill="#222"/><ellipse cx="5.6" cy="6.6" rx="1.4" ry="0.5" fill="#333"/></svg>
<div class="fl" style="left:578.5px;top:154.41px">2raumwohnung -- Wir trafen uns in einem ...</div>
<svg class="a" style="left:565px;top:164.58px" width="10" height="12" viewBox="0 0 10 12"><path d="M1.2 1.2h5.8l2.5 2.5v7.6h-8.3z" fill="#8A9AAA" opacity="0.6"/><path d="M0.4 0.4h5.8l2.4 2.4v7.7h-8.2z" fill="#D4EAFF" stroke="#A0C8F0" stroke-width="0.6"/><path d="M6.2 0.4l2.4 2.4h-2.4z" fill="#4A90E0"/><ellipse cx="3" cy="6.6" rx="1.6" ry="0.6" fill="#222"/><rect x="3.9" y="3.8" width="1.9" height="2.9" rx="0.6" fill="#222"/><ellipse cx="5.6" cy="6.6" rx="1.4" ry="0.5" fill="#333"/></svg>
<div class="fl" style="left:578.5px;top:166.48px">50 Cent -- P I M P~6.mp3</div>
<svg class="a" style="left:565px;top:176.65px" width="10" height="12" viewBox="0 0 10 12"><path d="M1.2 1.2h5.8l2.5 2.5v7.6h-8.3z" fill="#8A9AAA" opacity="0.6"/><path d="M0.4 0.4h5.8l2.4 2.4v7.7h-8.2z" fill="#D4EAFF" stroke="#A0C8F0" stroke-width="0.6"/><path d="M6.2 0.4l2.4 2.4h-2.4z" fill="#4A90E0"/><ellipse cx="3" cy="6.6" rx="1.6" ry="0.6" fill="#222"/><rect x="3.9" y="3.8" width="1.9" height="2.9" rx="0.6" fill="#222"/><ellipse cx="5.6" cy="6.6" rx="1.4" ry="0.5" fill="#333"/></svg>
<div class="fl" style="left:578.5px;top:178.55px">Air -- Cherry Blossom Girl~6.mp3</div>
<svg class="a" style="left:565px;top:188.72px" width="10" height="12" viewBox="0 0 10 12"><path d="M1.2 1.2h5.8l2.5 2.5v7.6h-8.3z" fill="#8A9AAA" opacity="0.6"/><path d="M0.4 0.4h5.8l2.4 2.4v7.7h-8.2z" fill="#D4EAFF" stroke="#A0C8F0" stroke-width="0.6"/><path d="M6.2 0.4l2.4 2.4h-2.4z" fill="#4A90E0"/><ellipse cx="3" cy="6.6" rx="1.6" ry="0.6" fill="#222"/><rect x="3.9" y="3.8" width="1.9" height="2.9" rx="0.6" fill="#222"/><ellipse cx="5.6" cy="6.6" rx="1.4" ry="0.5" fill="#333"/></svg>
<div class="fl" style="left:578.5px;top:190.62px">Alec Empire -- Addicted To You~3.mp3</div>
<svg class="a" style="left:565px;top:200.79px" width="10" height="12" viewBox="0 0 10 12"><path d="M1.2 1.2h5.8l2.5 2.5v7.6h-8.3z" fill="#8A9AAA" opacity="0.6"/><path d="M0.4 0.4h5.8l2.4 2.4v7.7h-8.2z" fill="#D4EAFF" stroke="#A0C8F0" stroke-width="0.6"/><path d="M6.2 0.4l2.4 2.4h-2.4z" fill="#4A90E0"/><ellipse cx="3" cy="6.6" rx="1.6" ry="0.6" fill="#222"/><rect x="3.9" y="3.8" width="1.9" height="2.9" rx="0.6" fill="#222"/><ellipse cx="5.6" cy="6.6" rx="1.4" ry="0.5" fill="#333"/></svg>
<div class="fl" style="left:578.5px;top:202.69px">Anajo -- An Der Bahn~5.mp3</div>
<svg class="a" style="left:565px;top:212.86px" width="10" height="12" viewBox="0 0 10 12"><path d="M1.2 1.2h5.8l2.5 2.5v7.6h-8.3z" fill="#8A9AAA" opacity="0.6"/><path d="M0.4 0.4h5.8l2.4 2.4v7.7h-8.2z" fill="#D4EAFF" stroke="#A0C8F0" stroke-width="0.6"/><path d="M6.2 0.4l2.4 2.4h-2.4z" fill="#4A90E0"/><ellipse cx="3" cy="6.6" rx="1.6" ry="0.6" fill="#222"/><rect x="3.9" y="3.8" width="1.9" height="2.9" rx="0.6" fill="#222"/><ellipse cx="5.6" cy="6.6" rx="1.4" ry="0.5" fill="#333"/></svg>
<div class="fl" style="left:578.5px;top:214.76px">Anajo -- Monika Tanzband~4.mp3</div>
<svg class="a" style="left:565px;top:224.93px" width="10" height="12" viewBox="0 0 10 12"><path d="M1.2 1.2h5.8l2.5 2.5v7.6h-8.3z" fill="#8A9AAA" opacity="0.6"/><path d="M0.4 0.4h5.8l2.4 2.4v7.7h-8.2z" fill="#D4EAFF" stroke="#A0C8F0" stroke-width="0.6"/><path d="M6.2 0.4l2.4 2.4h-2.4z" fill="#4A90E0"/><ellipse cx="3" cy="6.6" rx="1.6" ry="0.6" fill="#222"/><rect x="3.9" y="3.8" width="1.9" height="2.9" rx="0.6" fill="#222"/><ellipse cx="5.6" cy="6.6" rx="1.4" ry="0.5" fill="#333"/></svg>
<div class="fl" style="left:578.5px;top:226.83px">Andreas Johnson -- Glorious~4.mp3</div>
<svg class="a" style="left:565px;top:237.00px" width="10" height="12" viewBox="0 0 10 12"><path d="M1.2 1.2h5.8l2.5 2.5v7.6h-8.3z" fill="#8A9AAA" opacity="0.6"/><path d="M0.4 0.4h5.8l2.4 2.4v7.7h-8.2z" fill="#D4EAFF" stroke="#A0C8F0" stroke-width="0.6"/><path d="M6.2 0.4l2.4 2.4h-2.4z" fill="#4A90E0"/><ellipse cx="3" cy="6.6" rx="1.6" ry="0.6" fill="#222"/><rect x="3.9" y="3.8" width="1.9" height="2.9" rx="0.6" fill="#222"/><ellipse cx="5.6" cy="6.6" rx="1.4" ry="0.5" fill="#333"/></svg>
<div class="fl" style="left:578.5px;top:238.90px">Angelika Express -- Geh doch nach Berlin~...</div>
<svg class="a" style="left:565px;top:249.07px" width="10" height="12" viewBox="0 0 10 12"><path d="M1.2 1.2h5.8l2.5 2.5v7.6h-8.3z" fill="#8A9AAA" opacity="0.6"/><path d="M0.4 0.4h5.8l2.4 2.4v7.7h-8.2z" fill="#D4EAFF" stroke="#A0C8F0" stroke-width="0.6"/><path d="M6.2 0.4l2.4 2.4h-2.4z" fill="#4A90E0"/><ellipse cx="3" cy="6.6" rx="1.6" ry="0.6" fill="#222"/><rect x="3.9" y="3.8" width="1.9" height="2.9" rx="0.6" fill="#222"/><ellipse cx="5.6" cy="6.6" rx="1.4" ry="0.5" fill="#333"/></svg>
<div class="fl" style="left:578.5px;top:250.97px">Arctic Monkeys -- Flourescent Adolescent...</div>
<svg class="a" style="left:565px;top:261.14px" width="10" height="12" viewBox="0 0 10 12"><path d="M1.2 1.2h5.8l2.5 2.5v7.6h-8.3z" fill="#8A9AAA" opacity="0.6"/><path d="M0.4 0.4h5.8l2.4 2.4v7.7h-8.2z" fill="#D4EAFF" stroke="#A0C8F0" stroke-width="0.6"/><path d="M6.2 0.4l2.4 2.4h-2.4z" fill="#4A90E0"/><ellipse cx="3" cy="6.6" rx="1.6" ry="0.6" fill="#222"/><rect x="3.9" y="3.8" width="1.9" height="2.9" rx="0.6" fill="#222"/><ellipse cx="5.6" cy="6.6" rx="1.4" ry="0.5" fill="#333"/></svg>
<div class="fl" style="left:578.5px;top:263.04px">Asian Dub Foundation -- Fortress Europe~...</div>
<svg class="a" style="left:565px;top:273.21px" width="10" height="12" viewBox="0 0 10 12"><path d="M1.2 1.2h5.8l2.5 2.5v7.6h-8.3z" fill="#8A9AAA" opacity="0.6"/><path d="M0.4 0.4h5.8l2.4 2.4v7.7h-8.2z" fill="#D4EAFF" stroke="#A0C8F0" stroke-width="0.6"/><path d="M6.2 0.4l2.4 2.4h-2.4z" fill="#4A90E0"/><ellipse cx="3" cy="6.6" rx="1.6" ry="0.6" fill="#222"/><rect x="3.9" y="3.8" width="1.9" height="2.9" rx="0.6" fill="#222"/><ellipse cx="5.6" cy="6.6" rx="1.4" ry="0.5" fill="#333"/></svg>
<div class="fl" style="left:578.5px;top:275.11px">At The Drive In -- Invalid Litter Dept.~4.mp3</div>
<svg class="a" style="left:565px;top:285.28px" width="10" height="12" viewBox="0 0 10 12"><path d="M1.2 1.2h5.8l2.5 2.5v7.6h-8.3z" fill="#8A9AAA" opacity="0.6"/><path d="M0.4 0.4h5.8l2.4 2.4v7.7h-8.2z" fill="#D4EAFF" stroke="#A0C8F0" stroke-width="0.6"/><path d="M6.2 0.4l2.4 2.4h-2.4z" fill="#4A90E0"/><ellipse cx="3" cy="6.6" rx="1.6" ry="0.6" fill="#222"/><rect x="3.9" y="3.8" width="1.9" height="2.9" rx="0.6" fill="#222"/><ellipse cx="5.6" cy="6.6" rx="1.4" ry="0.5" fill="#333"/></svg>
<div class="fl" style="left:578.5px;top:287.18px">Beatsteaks -- Hello Joe.mp3</div>
<svg class="a" style="left:565px;top:297.35px" width="10" height="12" viewBox="0 0 10 12"><path d="M1.2 1.2h5.8l2.5 2.5v7.6h-8.3z" fill="#8A9AAA" opacity="0.6"/><path d="M0.4 0.4h5.8l2.4 2.4v7.7h-8.2z" fill="#D4EAFF" stroke="#A0C8F0" stroke-width="0.6"/><path d="M6.2 0.4l2.4 2.4h-2.4z" fill="#4A90E0"/><ellipse cx="3" cy="6.6" rx="1.6" ry="0.6" fill="#222"/><rect x="3.9" y="3.8" width="1.9" height="2.9" rx="0.6" fill="#222"/><ellipse cx="5.6" cy="6.6" rx="1.4" ry="0.5" fill="#333"/></svg>
<div class="fl" style="left:578.5px;top:299.25px">Beginner -- Gustav Gans~3.mp3</div>
<div class="a" style="left:737px;top:116px;width:13px;height:195px;background:linear-gradient(90deg,#F3F3EE,#FDFDFB)"></div>
<div class="a" style="left:737px;top:117px;width:10px;height:10px;border:1px solid #C0D0F4;border-radius:2px;background:linear-gradient(135deg,#DDE8FE,#B8CDF9)"><svg class="a" style="left:1px;top:2px" width="7" height="5" viewBox="0 0 7 5"><path d="M0.5 4l3-3 3 3" stroke="#4D6185" stroke-width="1.4" fill="none"/></svg></div>
<div class="a" style="left:737px;top:128px;width:10px;height:15px;border:1px solid #B8CCF4;border-radius:2px;background:linear-gradient(90deg,#C9DAFC,#B4CAF8)"><div class="a" style="left:3px;top:5px;width:3px;height:4px;background:repeating-linear-gradient(#EEF4FE 0,#EEF4FE 1px,#A0B8E8 1px,#A0B8E8 2px)"></div></div>
<div class="a" style="left:737px;top:299px;width:10px;height:11px;border:1px solid #C0D0F4;border-radius:2px;background:linear-gradient(135deg,#DDE8FE,#B8CDF9)"><svg class="a" style="left:1px;top:3px" width="7" height="5" viewBox="0 0 7 5"><path d="M0.5 1l3 3 3-3" stroke="#4D6185" stroke-width="1.4" fill="none"/></svg></div>
<div class="a" style="left:559px;top:311.5px;width:192px;height:17px;border-left:1px solid #5A7EC8;border-right:1px solid #5A7EC8;background:linear-gradient(#C4D8FA,#A0BCF4 50%,#7CA0EE)"></div>
<svg class="a" style="left:563px;top:313.7px" width="9" height="12" viewBox="0 0 9 12"><rect x="0.5" y="1" width="8" height="1.5" fill="#555"/><path d="M1.5 2.5h6l-0.5 9h-5z" fill="#B8B8B8" stroke="#444" stroke-width="0.7"/><path d="M3.5 4v6M5.5 4v6" stroke="#555" stroke-width="0.6"/></svg>
<div class="t" style="left:576px;top:316.1px;font-size:8.6px;font-weight:bold">Papierkorb</div>
<div class="a" style="left:559px;top:328px;width:192px;height:18px;border:1px solid #5A7EC8;border-top:none;background:linear-gradient(#F2E0A8,#EAC878 50%,#E0A040)"></div>
<svg class="a" style="left:562.5px;top:331.5px" width="12" height="11" viewBox="0 0 12 11"><rect x="5.5" y="0.5" width="5" height="6.5" fill="#fff" stroke="#555" stroke-width="0.7"/><path d="M8.5 0.5v2h2" fill="none" stroke="#777" stroke-width="0.5"/><path d="M0.5 4.5h3.5l1 1h5.5v5h-10z" fill="#D8C838" stroke="#6A6010" stroke-width="0.7"/><path d="M1 6.5h10.5l-1.5 4h-9.5z" fill="#F4EC60" stroke="#6A6010" stroke-width="0.6"/></svg>
<div class="t" style="left:576px;top:333.1px;font-size:8.6px;font-weight:bold;letter-spacing:0.1px">G:\incoming\eldo\</div>
<!-- clock -->
<div class="t" style="left:565.5px;top:354px;font-size:45.8px">08:42:55</div>
<div class="t" style="left:583px;top:409.2px;font-size:45.8px">- 17:05</div>
<!--END-->
</body></html>
